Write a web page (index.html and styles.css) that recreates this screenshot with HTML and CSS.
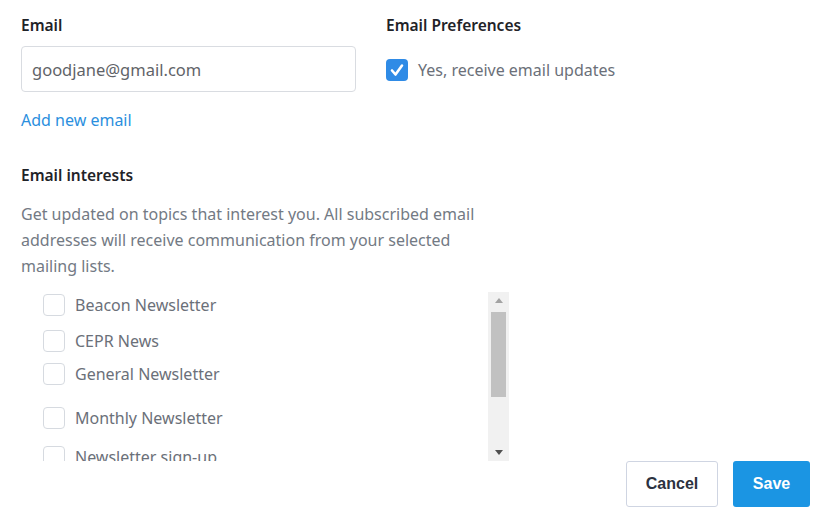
FILE: index.html
```html
<!DOCTYPE html>
<html>
<head>
<meta charset="utf-8">
<link rel="stylesheet" href="styles.css">
</head>
<body>
<div class="page">
  <div class="top">
    <div class="col col-left">
      <div class="heading">Email</div>
      <div class="input">goodjane@gmail.com</div>
      <a class="link">Add new email</a>
    </div>
    <div class="col col-right">
      <div class="heading">Email Preferences</div>
      <label class="pref">
        <span class="cb checked">
          <svg viewBox="0 0 22 22" width="22" height="22"><path d="M6 11.5 L9.5 15.5 L16 6.5" fill="none" stroke="#fff" stroke-width="2.6" stroke-linecap="round" stroke-linejoin="round"/></svg>
        </span>
        <span class="pref-text">Yes, receive email updates</span>
      </label>
    </div>
  </div>
  <div class="heading interests">Email interests</div>
  <p class="desc">Get updated on topics that interest you. All subscribed email addresses will receive communication from your selected mailing lists.</p>
  <div class="listbox">
    <div class="list">
      <div class="item g1"><span class="cb"></span><span class="itxt">Beacon Newsletter</span></div>
      <div class="item g2"><span class="cb"></span><span class="itxt">CEPR News</span></div>
      <div class="item g3"><span class="cb"></span><span class="itxt">General Newsletter</span></div>
      <div class="item g4"><span class="cb"></span><span class="itxt">Monthly Newsletter</span></div>
      <div class="item g5"><span class="cb"></span><span class="itxt">Newsletter sign-up</span></div>
    </div>
    <div class="scrollbar">
      <div class="arrow up"></div>
      <div class="thumb"></div>
      <div class="track-fill"></div>
      <div class="arrow down"></div>
    </div>
  </div>
  <div class="footer">
    <button class="btn cancel">Cancel</button>
    <button class="btn save">Save</button>
  </div>
</div>
</body>
</html>
```
FILE: styles.css
```css
html, body {
  margin: 0;
  padding: 0;
  background: #fff;
}
body {
  font-family: "Noto Sans", "Open Sans", sans-serif;
  color: #212529;
}
.page {
  width: 820px;
  height: 526px;
  box-sizing: border-box;
  padding: 13px 10px 0 21px;
  overflow: hidden;
}
.top {
  display: flex;
  gap: 30px;
}
.col-left {
  width: 335px;
  display: flex;
  flex-direction: column;
}
.heading {
  font-size: 15.5px;
  font-weight: 600;
  line-height: 24px;
  color: #1f2328;
}
.input {
  margin-top: 9px;
  height: 46px;
  box-sizing: border-box;
  border: 1px solid #d9dce1;
  border-radius: 4px;
  padding: 0 10px;
  display: flex;
  align-items: center;
  font-size: 16.5px;
  color: #5f6368;
}
.link {
  margin-top: 16px;
  font-size: 16px;
  line-height: 24px;
  color: #2b8fde;
}
.pref {
  margin-top: 22px;
  display: flex;
  align-items: center;
  gap: 10px;
}
.cb {
  width: 22px;
  height: 22px;
  box-sizing: border-box;
  border: 1px solid #d6dae0;
  border-radius: 4px;
  background: #fff;
  flex: none;
  display: block;
}
.cb.checked {
  border: none;
  background: #2f8be6;
}
.cb svg {
  display: block;
}
.pref-text {
  font-size: 16px;
  color: #6b7079;
}
.interests {
  margin-top: 31px;
}
.desc {
  margin: 14px 0 0 0;
  width: 470px;
  font-size: 16px;
  line-height: 26px;
  color: #737a84;
}
.listbox {
  margin-top: 13px;
  width: 488px;
  height: 169px;
  display: flex;
}
.list {
  flex: 1;
  overflow: hidden;
  padding-left: 22px;
}
.item {
  display: flex;
  align-items: center;
  gap: 10px;
  height: 22px;
}
.g1 { margin-top: 2px; }
.g2 { margin-top: 14px; }
.g3 { margin-top: 11px; }
.g4 { margin-top: 22px; }
.g5 { margin-top: 17px; }
.itxt {
  font-size: 16px;
  color: #6b7079;
  white-space: nowrap;
}
.scrollbar {
  width: 21px;
  background: #f1f1f1;
  display: flex;
  flex-direction: column;
  align-items: center;
}
.arrow {
  width: 0;
  height: 0;
  border-left: 4px solid transparent;
  border-right: 4px solid transparent;
}
.arrow.up {
  margin-top: 6px;
  border-bottom: 5px solid #a3a3a3;
  margin-bottom: 9px;
}
.thumb {
  width: 15px;
  height: 85px;
  background: #c1c1c1;
}
.track-fill {
  flex: 1;
}
.arrow.down {
  border-top: 5px solid #505050;
  margin-bottom: 6px;
}
.footer {
  display: flex;
  justify-content: flex-end;
  gap: 15px;
  padding-right: 0;
}
.btn {
  height: 46px;
  box-sizing: border-box;
  border-radius: 3px;
  font-family: "Liberation Sans", Arial, sans-serif;
  font-weight: 700;
  font-size: 16px;
  padding: 0;
}
.cancel {
  width: 92px;
  background: #fff;
  border: 1px solid #cfd5e2;
  color: #2c3240;
}
.save {
  width: 77px;
  background: #1b95e3;
  border: none;
  color: #fff;
}
```
